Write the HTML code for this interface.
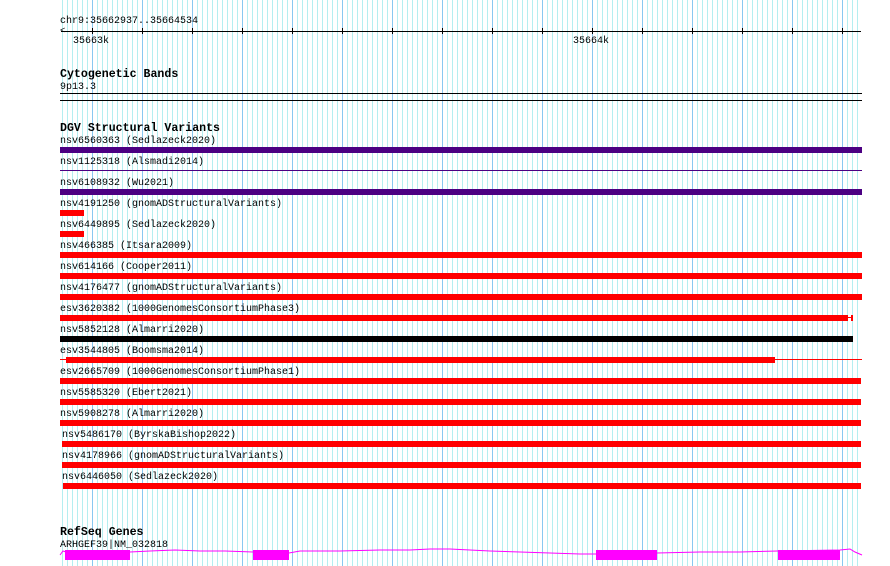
<!DOCTYPE html><html><head><style>
body{margin:0;width:890px;height:566px;background:#fff;position:relative;overflow:hidden;font-family:"Liberation Mono","DejaVu Sans Mono",monospace;font-size:10px;color:#000}
.g{position:absolute;left:62px;top:0;width:800px;height:566px;background:repeating-linear-gradient(90deg,#b4eef0 0 1px,transparent 1px 5px)}
.g2{position:absolute;left:92px;top:0;width:770px;height:566px;background:repeating-linear-gradient(90deg,#88c8f0 0 1px,transparent 1px 50px)}
.t{position:absolute;left:60px;white-space:pre;line-height:11px;margin-top:1px}
.h{font-weight:bold;font-size:11.6px}
.b{position:absolute;height:6px}
.r{background:#f00}.p{background:#4b0082}.k{background:#000}
.tk{position:absolute;top:28px;width:1px;height:6px;background:#000}
</style></head><body>
<div class="g"></div><div class="g2"></div>
<div class="t" style="top:15px">chr9:35662937..35664534</div>
<div style="position:absolute;left:61px;top:31px;width:800px;height:1px;background:#000"></div>
<div style="position:absolute;left:60px;top:27px;font-size:9px;line-height:9px">&lt;</div>
<div class="tk" style="left:92px"></div><div class="tk" style="left:142px"></div><div class="tk" style="left:192px"></div><div class="tk" style="left:242px"></div><div class="tk" style="left:292px"></div><div class="tk" style="left:342px"></div><div class="tk" style="left:392px"></div><div class="tk" style="left:442px"></div><div class="tk" style="left:492px"></div><div class="tk" style="left:542px"></div><div class="tk" style="left:592px"></div><div class="tk" style="left:642px"></div><div class="tk" style="left:692px"></div><div class="tk" style="left:742px"></div><div class="tk" style="left:792px"></div><div class="tk" style="left:842px"></div>
<div class="t" style="top:35px;left:73px">35663k</div>
<div class="t" style="top:35px;left:573px">35664k</div>
<div class="t h" style="top:68px">Cytogenetic Bands</div>
<div class="t" style="top:81px">9p13.3</div>
<div style="position:absolute;left:60px;top:93px;width:802px;height:1px;background:#000"></div>
<div style="position:absolute;left:60px;top:100px;width:802px;height:1px;background:#000"></div>
<div class="t h" style="top:122px">DGV Structural Variants</div>
<div class="t" style="top:135px">nsv6560363 (Sedlazeck2020)</div>
<div class="b p" style="top:147px;left:60px;width:802px"></div>
<div class="t" style="top:156px">nsv1125318 (Alsmadi2014)</div>
<div class="b p" style="top:170px;left:60px;width:802px;height:1px"></div>
<div class="t" style="top:177px">nsv6108932 (Wu2021)</div>
<div class="b p" style="top:189px;left:60px;width:802px"></div>
<div class="t" style="top:198px">nsv4191250 (gnomADStructuralVariants)</div>
<div class="b r" style="top:210px;left:60px;width:24px"></div>
<div class="t" style="top:219px">nsv6449895 (Sedlazeck2020)</div>
<div class="b r" style="top:231px;left:60px;width:24px"></div>
<div class="t" style="top:240px">nsv466385 (Itsara2009)</div>
<div class="b r" style="top:252px;left:60px;width:802px"></div>
<div class="t" style="top:261px">nsv614166 (Cooper2011)</div>
<div class="b r" style="top:273px;left:60px;width:802px"></div>
<div class="t" style="top:282px">nsv4176477 (gnomADStructuralVariants)</div>
<div class="b r" style="top:294px;left:60px;width:802px"></div>
<div class="t" style="top:303px">esv3620382 (1000GenomesConsortiumPhase3)</div>
<div class="b r" style="top:315px;left:60px;width:788px"></div>
<div class="b r" style="top:317px;left:848px;width:4px;height:1px"></div>
<div class="b r" style="top:315px;left:851px;width:2px"></div>
<div class="t" style="top:324px">nsv5852128 (Almarri2020)</div>
<div class="b k" style="top:336px;left:60px;width:793px"></div>
<div class="t" style="top:345px">esv3544805 (Boomsma2014)</div>
<div class="b r" style="top:359px;left:60px;width:802px;height:1px"></div>
<div class="b r" style="top:357px;left:66px;width:709px"></div>
<div class="t" style="top:366px">esv2665709 (1000GenomesConsortiumPhase1)</div>
<div class="b r" style="top:378px;left:60px;width:801px"></div>
<div class="t" style="top:387px">nsv5585320 (Ebert2021)</div>
<div class="b r" style="top:399px;left:60px;width:801px"></div>
<div class="t" style="top:408px">nsv5908278 (Almarri2020)</div>
<div class="b r" style="top:420px;left:60px;width:801px"></div>
<div class="t" style="top:429px;left:62px">nsv5486170 (ByrskaBishop2022)</div>
<div class="b r" style="top:441px;left:62px;width:799px"></div>
<div class="t" style="top:450px;left:62px">nsv4178966 (gnomADStructuralVariants)</div>
<div class="b r" style="top:462px;left:62px;width:799px"></div>
<div class="t" style="top:471px;left:62px">nsv6446050 (Sedlazeck2020)</div>
<div class="b r" style="top:483px;left:63px;width:798px"></div>
<div class="t h" style="top:526px">RefSeq Genes</div>
<div class="t" style="top:539px">ARHGEF39|NM_032818</div>
<svg style="position:absolute;left:0;top:0" width="890" height="566"><polyline fill="none" stroke="#f0f" stroke-width="1" points="60,555 63,551 66,552 130,552 150,551 175,550 200,551 225,551 253,552 289,553 300,551 340,551 380,550 410,550 430,549 450,549 470,550 490,551 520,552 550,553 580,554 596,554 657,553 700,552 740,552 778,551 840,550 850,549 855,552 862,555"/>
<rect x="65" y="550" width="65" height="10" fill="#f0f"/><rect x="253" y="550" width="36" height="10" fill="#f0f"/><rect x="596" y="550" width="61" height="10" fill="#f0f"/><rect x="778" y="550" width="62" height="10" fill="#f0f"/></svg>
</body></html>
